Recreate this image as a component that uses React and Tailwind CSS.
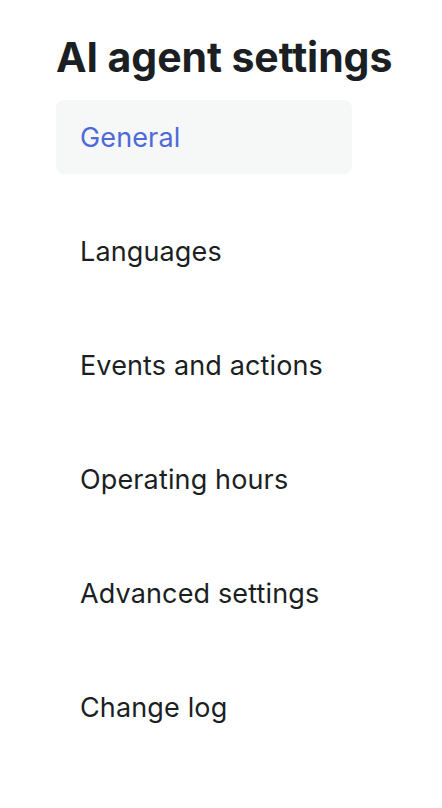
const items = [
  { label: 'General', active: true },
  { label: 'Languages' },
  { label: 'Events and actions' },
  { label: 'Operating hours' },
  { label: 'Advanced settings' },
  { label: 'Change log' },
]

export default function App() {
  return (
    <div className="min-h-screen bg-white pl-14 pt-[31px] font-['Inter',sans-serif] text-[#1b1f23]">
      <h1 className="text-[41px] font-bold leading-[52px] tracking-[-0.002em]">AI agent settings</h1>
      <nav className="mt-[17px] flex w-[296px] flex-col gap-10">
        {items.map((item) => (
          <a
            key={item.label}
            href="#"
            onClick={(e) => e.preventDefault()}
            className={
              item.active
                ? 'flex h-[74px] items-center rounded-lg bg-[#f6f7f7] px-6 pt-[2px] text-[27px] tracking-[0.005em] text-[#4e6ad8]'
                : 'flex h-[74px] items-center rounded-lg px-6 pt-[2px] text-[27px] tracking-[0.005em] text-[#1b1f23]'
            }
          >
            {item.label}
          </a>
        ))}
      </nav>
    </div>
  )
}
